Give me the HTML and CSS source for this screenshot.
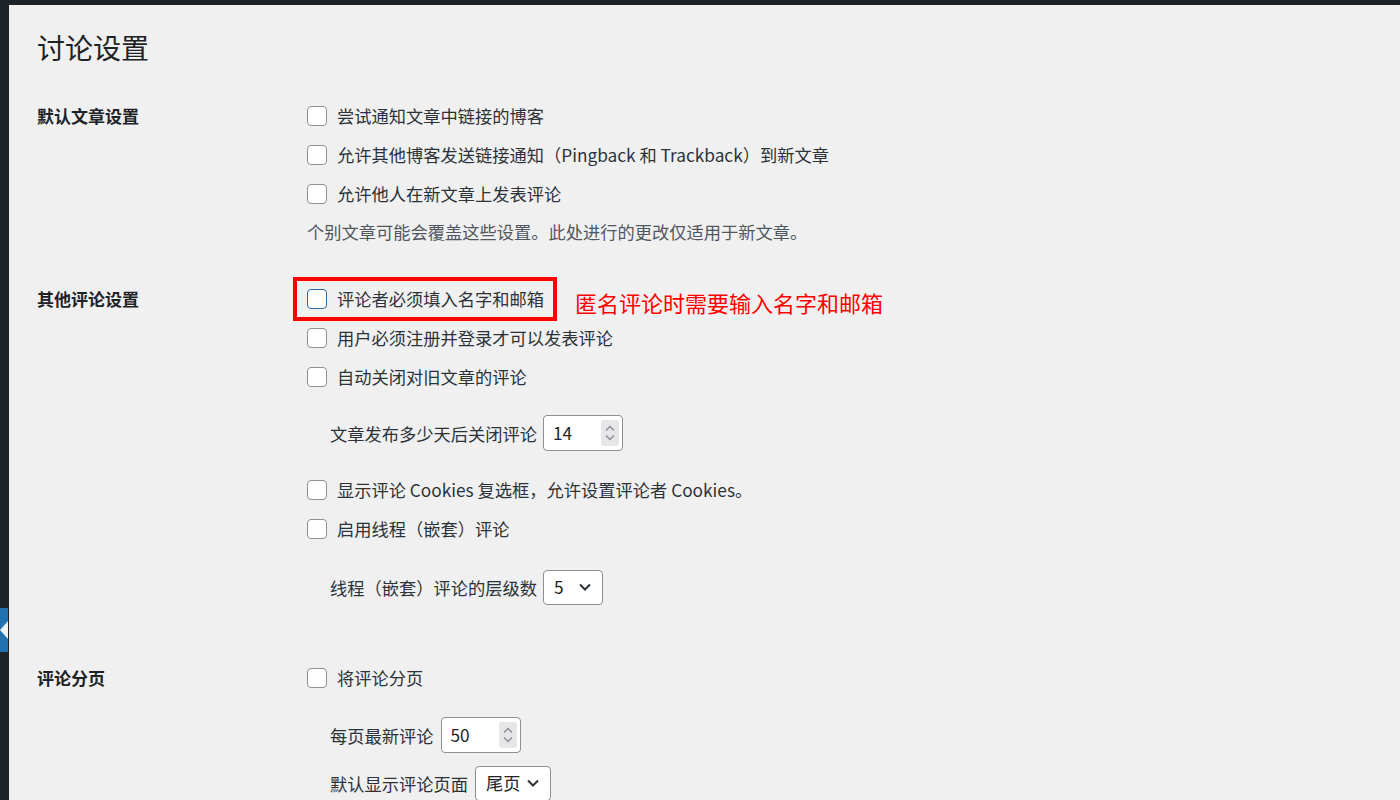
FILE: index.html
```html
<!DOCTYPE html>
<html lang="zh-CN">
<head>
<meta charset="utf-8">
<title>讨论设置</title>
<link rel="stylesheet" href="styles.css">
</head>
<body>
<div class="frame">
  <aside class="sidebar">
    <div class="sidebar-spacer"></div>
    <div class="menu-current"></div>
  </aside>
  <main class="content">
    <h1 class="page-title">讨论设置</h1>

    <section class="section sec-1">
      <div class="sec-label">默认文章设置</div>
      <div class="sec-body">
        <div class="opt"><span class="cb"></span><span>尝试通知文章中链接的博客</span></div>
        <div class="opt"><span class="cb"></span><span>允许其他博客发送链接通知（Pingback 和 Trackback）到新文章</span></div>
        <div class="opt"><span class="cb"></span><span>允许他人在新文章上发表评论</span></div>
        <div class="desc">个别文章可能会覆盖这些设置。此处进行的更改仅适用于新文章。</div>
      </div>
    </section>

    <section class="section sec-2">
      <div class="sec-label">其他评论设置</div>
      <div class="sec-body">
        <div class="opt opt-marked">
          <span class="mark-box"></span>
          <span class="cb cb-focus"></span><span>评论者必须填入名字和邮箱</span>
          <span class="note">匿名评论时需要输入名字和邮箱</span>
        </div>
        <div class="opt"><span class="cb"></span><span>用户必须注册并登录才可以发表评论</span></div>
        <div class="opt"><span class="cb"></span><span>自动关闭对旧文章的评论</span></div>
        <div class="sub sub-a">
          <span>文章发布多少天后关闭评论</span>
          <span class="num w80"><span class="val">14</span>
            <svg class="spin" width="18" height="26" viewBox="0 0 18 26"><rect width="18" height="26" rx="3" fill="#e6e6e8"/><path d="M5 10.5 L9 6.5 L13 10.5" fill="none" stroke="#8a8d92" stroke-width="1.4"/><path d="M5 15.5 L9 19.5 L13 15.5" fill="none" stroke="#8a8d92" stroke-width="1.4"/></svg>
          </span>
        </div>
        <div class="opt"><span class="cb"></span><span>显示评论 Cookies 复选框，允许设置评论者 Cookies。</span></div>
        <div class="opt"><span class="cb"></span><span>启用线程（嵌套）评论</span></div>
        <div class="sub sub-b">
          <span>线程（嵌套）评论的层级数</span>
          <span class="sel w60"><span class="val">5</span>
            <svg class="chev" width="14" height="10" viewBox="0 0 14 10"><path d="M2 2.5 L7 7.5 L12 2.5" fill="none" stroke="#2c3338" stroke-width="2"/></svg>
          </span>
        </div>
      </div>
    </section>

    <section class="section sec-3">
      <div class="sec-label">评论分页</div>
      <div class="sec-body">
        <div class="opt"><span class="cb"></span><span>将评论分页</span></div>
        <div class="sub sub-c">
          <span>每页最新评论</span>
          <span class="num w80"><span class="val">50</span>
            <svg class="spin" width="18" height="26" viewBox="0 0 18 26"><rect width="18" height="26" rx="3" fill="#e6e6e8"/><path d="M5 10.5 L9 6.5 L13 10.5" fill="none" stroke="#8a8d92" stroke-width="1.4"/><path d="M5 15.5 L9 19.5 L13 15.5" fill="none" stroke="#8a8d92" stroke-width="1.4"/></svg>
          </span>
        </div>
        <div class="sub sub-d">
          <span>默认显示评论页面</span>
          <span class="sel w76"><span class="val">尾页</span>
            <svg class="chev" width="14" height="10" viewBox="0 0 14 10"><path d="M2 2.5 L7 7.5 L12 2.5" fill="none" stroke="#2c3338" stroke-width="2"/></svg>
          </span>
        </div>
      </div>
    </section>
  </main>
</div>
</body>
</html>
```

FILE: styles.css
```css
* { box-sizing: border-box; }
html, body { margin: 0; padding: 0; }
body {
  background: #1d2327;
  font-family: "Noto Sans CJK SC", "Noto Sans", sans-serif;
  color: #2c3338;
  width: 1400px;
  height: 800px;
  overflow: hidden;
}
.frame {
  display: flex;
  height: 800px;
}
.sidebar {
  width: 8px;
  flex: 0 0 8px;
  display: flex;
  flex-direction: column;
}
.sidebar-spacer { height: 608px; }
.menu-current {
  height: 44px;
  background: #2271b1;
  position: relative;
}
.menu-current::after {
  content: "";
  position: absolute;
  right: 0;
  top: 13px;
  border-top: 9px solid transparent;
  border-bottom: 9px solid transparent;
  border-right: 8px solid #f0f0f1;
}
.content {
  flex: 1;
  margin-top: 5px;
  margin-left: 1px;
  background: #f0f0f1;
  padding-left: 28px;
}
.page-title {
  margin: 0;
  padding-top: 24px;
  font-size: 28px;
  line-height: 36px;
  font-weight: 400;
  color: #1d2327;
}
.section {
  display: grid;
  grid-template-columns: 270px 1fr;
}
.sec-1 { margin-top: 31px; padding-bottom: 30px; }
.sec-2 { padding-bottom: 47px; }
.sec-label {
  font-size: 17px;
  font-weight: 700;
  color: #1d2327;
  line-height: 39px;
}
.sec-body { display: flex; flex-direction: column; }
.opt {
  height: 39px;
  display: flex;
  align-items: center;
  font-size: 17.25px;
  color: #2c3338;
}
.cb {
  width: 20px;
  height: 20px;
  flex: 0 0 20px;
  border: 1px solid #8c8f94;
  border-radius: 4px;
  background: #fff;
  margin-right: 10px;
}
.cb-focus {
  border: 1.5px solid #2f6aa0;
}
.opt-marked { position: relative; }
.mark-box {
  position: absolute;
  left: -14px;
  top: -2px;
  width: 264px;
  height: 44px;
  border: 4px solid #ff0000;
}
.note {
  margin-left: 31px;
  font-size: 22px;
  color: #ff0000;
  margin-top: 6px;
}
.desc {
  height: 36px;
  display: flex;
  align-items: center;
  font-size: 17.25px;
  color: #50575e;
}
.sub {
  height: 48px;
  display: flex;
  align-items: center;
  padding-left: 23px;
  font-size: 17.25px;
  color: #2c3338;
  gap: 6px;
}
.sub-a { margin-top: 13px; margin-bottom: 13px; }
.sub-b { margin-top: 15px; }
.sub-c { margin-top: 14px; gap: 7px; }
.sub-d { gap: 7px; }
.num, .sel {
  display: inline-flex;
  align-items: center;
  justify-content: space-between;
  height: 36px;
  background: #fff;
  border: 1px solid #8c8f94;
  border-radius: 4px;
  padding: 0 3px 0 9px;
  color: #1d2327;
  font-size: 17.25px;
}
.sel { height: 35px; padding: 0 10px 0 10px; }
.w80 { width: 80px; }
.w60 { width: 60px; }
.w76 { width: 76px; }
.val { line-height: 1; }
.spin { display: block; }
.chev { display: block; }
```
